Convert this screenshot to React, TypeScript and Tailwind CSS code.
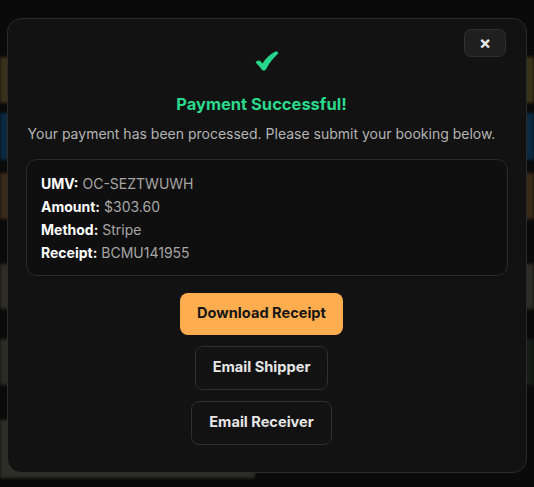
import React from "react";

function Row({ className }: { className: string }) {
  return <div className={className} />;
}

export default function App() {
  const font = { fontFamily: 'Inter, "Noto Sans", sans-serif' };
  return (
    <div className="relative h-[487px] w-[534px] overflow-hidden bg-[#0a0a0a]" style={font}>
      {/* dimmed, blurred page behind */}
      <div className="flex flex-col blur-[1.5px]">
        <div className="h-[57px]" />
        <Row className="h-[46px] bg-[#3a3119]" />
        <div className="h-[10px]" />
        <Row className="h-[47px] bg-[#0b2a41]" />
        <div className="h-[13px]" />
        <Row className="h-[46px] bg-[#3a2a18]" />
        <div className="h-[45px]" />
        <Row className="h-[45px] bg-[#2d2d25]" />
        <div className="h-[30px]" />
        <div className="flex h-[46px]">
          <div className="w-[267px] bg-[#2a2b22]" />
          <div className="flex-1 bg-[#141c18]" />
        </div>
        <div className="h-[35px]" />
        <Row className="h-[58px] w-[255px] bg-[#2d2e25]" />
      </div>

      {/* modal */}
      <div className="absolute inset-0 flex justify-center pt-[18px]">
        <div className="relative flex h-[455px] w-[520px] flex-col items-center rounded-[14px] border border-[#2b2b2b] bg-[#121212] px-[18px] pb-[26px] pt-[32px]">
          <button className="absolute right-[20px] top-[10px] flex h-[28px] w-[42px] items-center justify-center rounded-[7px] border border-[#2f2f2f] bg-[#1f1f1f] text-[18px] font-bold leading-none text-[#e5e5e5]">
            ×
          </button>

          <svg width="24" height="20" viewBox="0 0 24 20" className="shrink-0">
            <path
              d="M0.6 11.6 C1.6 9.6 4 8.8 5.6 10.2 L7.4 12.4 C10.8 7.4 15.2 3 20.4 0.6 C22 0 23.8 1.2 23 2.8 C18.6 6.8 14.4 12 11.2 18 C10.2 19.8 7.8 20.2 6.6 18.6 C4.8 16 3 13.8 0.6 11.6 Z"
              fill="#26d68b"
            />
          </svg>

          <div className="mt-[21px] w-full pr-[11px] text-center text-[16.5px] font-bold leading-[24px] text-[#2bd98c]">
            Payment Successful!
          </div>
          <div className="mt-[8px] w-full whitespace-nowrap pr-[11px] text-center text-[14px] leading-[20px] text-[#b4b4b4]">
            Your payment has been processed. Please submit your booking below.
          </div>

          <div className="mt-[15px] w-full rounded-[11px] border border-[#2a2a2a] bg-[#0f0f0f] px-[14px] pb-[11px] pt-[12px] text-[14px] leading-[23px]">
            <div>
              <span className="font-bold text-white">UMV:</span> <span className="text-[#a6a6a6]">OC-SEZTWUWH</span>
            </div>
            <div>
              <span className="font-bold text-white">Amount:</span> <span className="text-[#a6a6a6]">$303.60</span>
            </div>
            <div>
              <span className="font-bold text-white">Method:</span> <span className="text-[#a6a6a6]">Stripe</span>
            </div>
            <div>
              <span className="font-bold text-white">Receipt:</span> <span className="text-[#a6a6a6]">BCMU141955</span>
            </div>
          </div>

          <div className="mt-[17px] flex w-full flex-col items-center gap-[11px] pr-[11px]">
            <button className="h-[42px] rounded-[8px] bg-[#ffad4f] px-[17px] text-[14.6px] font-bold text-[#161616]">
              Download Receipt
            </button>
            <button className="h-[44px] rounded-[8px] border border-[#2f2f2f] bg-[#121212] px-[17px] text-[14.6px] font-bold text-[#e6e6e6]">
              Email Shipper
            </button>
            <button className="h-[44px] rounded-[8px] border border-[#2f2f2f] bg-[#121212] px-[17px] text-[14.6px] font-bold text-[#e6e6e6]">
              Email Receiver
            </button>
          </div>
        </div>
      </div>
    </div>
  );
}
